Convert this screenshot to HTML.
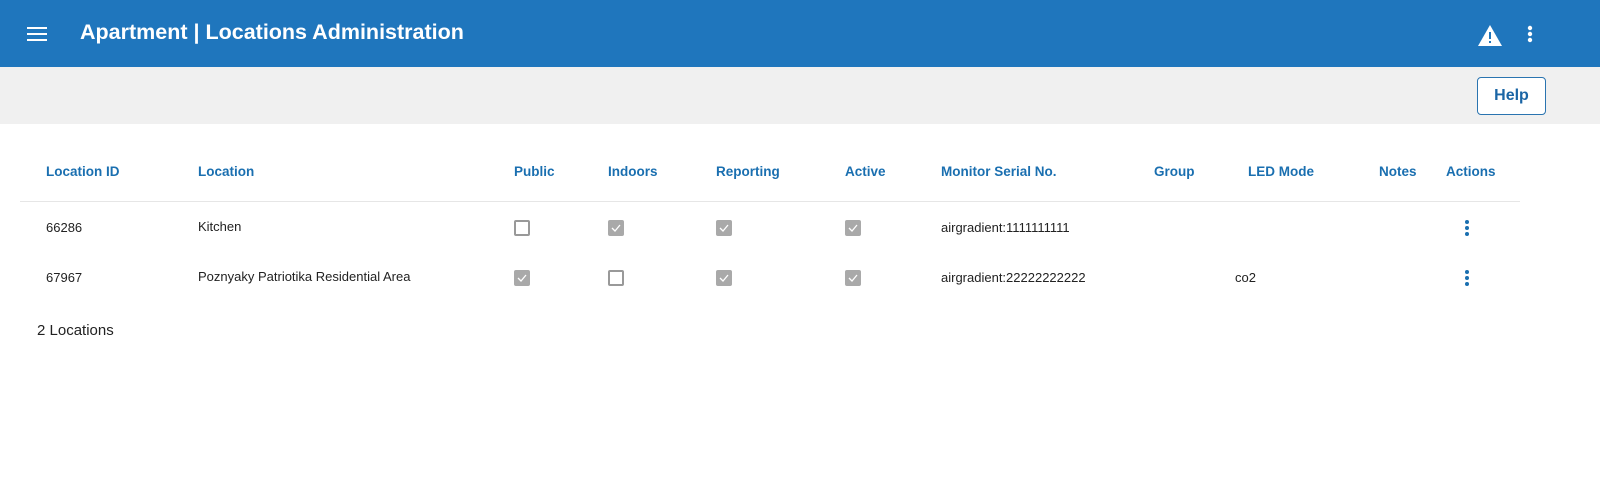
<!DOCTYPE html>
<html><head><style>
*{margin:0;padding:0;box-sizing:border-box}
body{width:1600px;height:484px;background:#fff;font-family:"Liberation Sans",sans-serif;position:relative;overflow:hidden}
.bar{position:absolute;left:0;top:0;width:1600px;height:67px;background:#1f76bd}
.title{position:absolute;left:80px;top:20px;color:#fff;font-size:21.5px;font-weight:bold;letter-spacing:0px}
.sub{position:absolute;left:0;top:67px;width:1600px;height:57px;background:#f0f0f0}
.help{position:absolute;left:1477px;top:77px;width:69px;height:38px;border:1px solid #2a74b0;border-radius:4px;background:#fff;color:#1a65a5;font-size:16px;font-weight:bold;text-align:center;line-height:36px}
.h{position:absolute;top:164px;color:#1a6fb0;font-size:13.5px;font-weight:bold}
.line{position:absolute;left:20px;top:201px;width:1500px;height:1px;background:#e6e6e6}
.c{position:absolute;font-size:13px;color:#222}
.cb{position:absolute;width:16px;height:16px;border-radius:2px}
.off{border:2px solid #999;background:#fff}
.on{background:#a9a9a9}
.on svg{position:absolute;left:2px;top:2px}
.dots{position:absolute;width:4px}
.dots i{display:block;width:4px;height:4px;border-radius:50%;background:#1a6fb0;margin-bottom:2px}
</style></head><body>
<div class="bar"></div>
<svg style="position:absolute;left:27px;top:27px" width="20" height="14"><rect y="0" width="20" height="2" fill="#fff"/><rect y="6" width="20" height="2" fill="#fff"/><rect y="12" width="20" height="2" fill="#fff"/></svg>
<div class="title">Apartment | Locations Administration</div>
<svg style="position:absolute;left:1478px;top:25px" width="24" height="21" viewBox="0 0 24 21"><path d="M12 0L24 21H0Z" fill="#fff"/><rect x="11" y="7" width="2" height="7" fill="#1f76bd"/><rect x="11" y="16" width="2" height="2" fill="#1f76bd"/></svg>
<svg style="position:absolute;left:1527px;top:25px" width="6" height="18"><circle cx="3" cy="3" r="2.2" fill="#fff"/><circle cx="3" cy="9" r="2.2" fill="#fff"/><circle cx="3" cy="15" r="2.2" fill="#fff"/></svg>
<div class="sub"></div>
<div class="help">Help</div>

<div class="h" style="left:46px">Location ID</div>
<div class="h" style="left:198px">Location</div>
<div class="h" style="left:514px">Public</div>
<div class="h" style="left:608px">Indoors</div>
<div class="h" style="left:716px">Reporting</div>
<div class="h" style="left:845px">Active</div>
<div class="h" style="left:941px">Monitor Serial No.</div>
<div class="h" style="left:1154px">Group</div>
<div class="h" style="left:1248px">LED Mode</div>
<div class="h" style="left:1379px">Notes</div>
<div class="h" style="left:1446px">Actions</div>
<div class="line"></div>

<div class="c" style="left:46px;top:220px">66286</div>
<div class="c" style="left:198px;top:219px">Kitchen</div>
<div class="cb off" style="left:514px;top:220px"></div>
<div class="cb on" style="left:608px;top:220px"><svg width="12" height="12"><path d="M2 6l3 3 5-6" stroke="#fff" stroke-width="1.3" fill="none"/></svg></div>
<div class="cb on" style="left:716px;top:220px"><svg width="12" height="12"><path d="M2 6l3 3 5-6" stroke="#fff" stroke-width="1.3" fill="none"/></svg></div>
<div class="cb on" style="left:845px;top:220px"><svg width="12" height="12"><path d="M2 6l3 3 5-6" stroke="#fff" stroke-width="1.3" fill="none"/></svg></div>
<div class="c" style="left:941px;top:220px">airgradient:1111111111</div>
<div class="dots" style="left:1465px;top:220px"><i></i><i></i><i></i></div>

<div class="c" style="left:46px;top:270px">67967</div>
<div class="c" style="left:198px;top:269px">Poznyaky Patriotika Residential Area</div>
<div class="cb on" style="left:514px;top:270px"><svg width="12" height="12"><path d="M2 6l3 3 5-6" stroke="#fff" stroke-width="1.3" fill="none"/></svg></div>
<div class="cb off" style="left:608px;top:270px"></div>
<div class="cb on" style="left:716px;top:270px"><svg width="12" height="12"><path d="M2 6l3 3 5-6" stroke="#fff" stroke-width="1.3" fill="none"/></svg></div>
<div class="cb on" style="left:845px;top:270px"><svg width="12" height="12"><path d="M2 6l3 3 5-6" stroke="#fff" stroke-width="1.3" fill="none"/></svg></div>
<div class="c" style="left:941px;top:270px">airgradient:22222222222</div>
<div class="c" style="left:1235px;top:270px">co2</div>
<div class="dots" style="left:1465px;top:270px"><i></i><i></i><i></i></div>

<div class="c" style="left:37px;top:322px;font-size:15px">2 Locations</div>
</body></html>
